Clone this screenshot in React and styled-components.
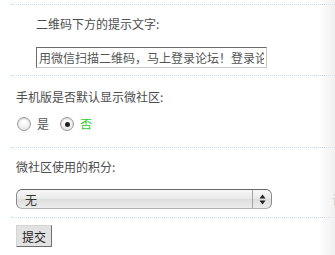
import React from "react";
import styled, { createGlobalStyle } from "styled-components";

const Global = createGlobalStyle`
  html, body {
    margin: 0;
    padding: 0;
    background: #fff;
    overflow: hidden;
  }
  body {
    font-family: "Noto Sans CJK SC", "Noto Sans", sans-serif;
    font-size: 12px;
    color: #555;
  }
`;

const Page = styled.div`
  padding-top: 4px;
  margin-left: 11px;
  width: 400px;
`;

const Row = styled.div`
  display: flex;
  flex-direction: column;
  align-items: flex-start;
  border-top: 1px dotted #bcdcec;
  padding: ${(p) => p.$pad};
  padding-left: ${(p) => p.$indent || 5}px;
`;

const Label = styled.div`
  line-height: 20px;
  height: 20px;
  color: #4d4d4d;
  white-space: nowrap;
`;

const TextInput = styled.input`
  box-sizing: border-box;
  width: 231px;
  height: 21px;
  margin-top: 13px;
  padding: 0 2px;
  font-family: inherit;
  font-size: 12px;
  color: #555;
  border: 1px solid;
  border-color: #6b6b6b #c8c8c8 #c8c8c8 #6b6b6b;
  outline: none;
  background: #fff;
`;

const RadioLine = styled.div`
  display: flex;
  align-items: center;
  height: 20px;
  margin-top: 7px;
`;

const Radio = styled.input.attrs({ type: "radio" })`
  appearance: none;
  margin: 0 6px 0 1px;
  width: 14px;
  height: 14px;
  border-radius: 50%;
  border: 1px solid #9a9a9a;
  background: radial-gradient(circle at 50% 30%, #ffffff 0%, #f4f4f4 45%, #dcdcdc 100%);
  box-shadow: inset 0 1px 1px rgba(0, 0, 0, 0.15);
  display: grid;
  place-items: center;
  &:checked::after {
    content: "";
    width: 5px;
    height: 5px;
    border-radius: 50%;
    background: #222;
  }
`;

const RadioText = styled.span`
  line-height: 20px;
  margin-right: 10px;
  color: ${(p) => (p.$on ? "#2ecc2e" : "#555")};
`;

const SelectLine = styled.div`
  display: flex;
  align-items: center;
  margin-top: 12px;
`;

const SelectBox = styled.div`
  position: relative;
  width: 256px;
  height: 20px;
`;

const Select = styled.select`
  appearance: none;
  box-sizing: border-box;
  width: 100%;
  height: 100%;
  margin: 0;
  padding: 0 24px 0 8px;
  font-family: inherit;
  font-size: 12px;
  color: #333;
  border: 1px solid #8a8a8a;
  border-top-color: #6a6a6a;
  border-bottom-color: #b0b0b0;
  border-radius: 6px;
  background: linear-gradient(#f7f7f7, #e9e9e9 50%, #dedede 51%, #ececec);
  outline: none;
`;

const Arrows = styled.span`
  position: absolute;
  top: 1px;
  right: 1px;
  bottom: 1px;
  width: 18px;
  border-left: 1px solid #a5a5a5;
  display: flex;
  align-items: center;
  justify-content: center;
  pointer-events: none;
`;

const Tip = styled.span`
  margin-left: 60px;
  color: #8a8a8a;
  white-space: nowrap;
`;

const Button = styled.button`
  margin-top: 7px;
  box-sizing: border-box;
  width: 36px;
  height: 22px;
  padding: 0;
  font-family: inherit;
  font-size: 12px;
  color: #222;
  background: #e2e2e2;
  border: 1px solid;
  border-color: #d4d4d4 #6e6e6e #6e6e6e #d4d4d4;
`;

const Shade = styled.div`
  position: fixed;
  top: 0;
  right: 0;
  bottom: 0;
  width: 16px;
  background: linear-gradient(to right, rgba(235, 235, 235, 0), rgba(235, 235, 235, 0.75));
  pointer-events: none;
`;

export default function App() {
  return (
    <>
      <Global />
      <Page>
        <Row $pad="9px 0 7px" $indent={25}>
          <Label>二维码下方的提示文字:</Label>
          <TextInput
            defaultValue="用微信扫描二维码，马上登录论坛！登录论坛后即可参与讨论"
          />
        </Row>
        <Row $pad="11px 0 13px">
          <Label>手机版是否默认显示微社区:</Label>
          <RadioLine>
            <Radio name="wsq" />
            <RadioText>是</RadioText>
            <Radio name="wsq" defaultChecked />
            <RadioText $on>否</RadioText>
          </RadioLine>
        </Row>
        <Row $pad="9px 0 8px">
          <Label>微社区使用的积分:</Label>
          <SelectLine>
            <SelectBox>
              <Select defaultValue="none">
                <option value="none">无</option>
              </Select>
              <Arrows>
                <svg width="7" height="11" viewBox="0 0 7 11">
                  <path d="M3.5 0.5 L6.5 4.5 L0.5 4.5 Z" fill="#222" />
                  <path d="M3.5 10.5 L6.5 6.5 L0.5 6.5 Z" fill="#222" />
                </svg>
              </Arrows>
            </SelectBox>
            <Tip>设置微社区使用的积分类型</Tip>
          </SelectLine>
        </Row>
        <Row $pad="0 0 10px">
          <Button type="button">提交</Button>
        </Row>
      </Page>
      <Shade />
    </>
  );
}
